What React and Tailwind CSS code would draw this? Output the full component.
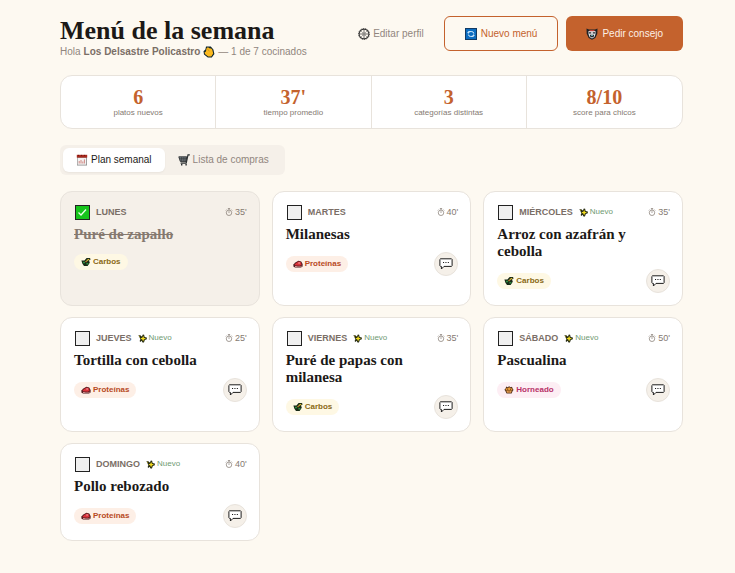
import React, { useState } from 'react';

const GearIcon = () => (
  <svg viewBox="0 0 12 12" className="size-3 shrink-0" fill="none" stroke="#333" aria-hidden="true">
    <circle cx="6" cy="6" r="4.9" strokeWidth="1.1" />
    <circle cx="6" cy="6" r="5.5" strokeWidth="0.8" strokeDasharray="1.2 1.2" />
    <circle cx="6" cy="6" r="1.1" strokeWidth="0.7" />
    <path d="M6 1.4v3.4M6 7.2v3.4M1.4 6h3.4M7.2 6h3.4" strokeWidth="0.7" />
    <path d="M3 3l2 2M7 7l2 2M9 3L7 5M5 7L3 9" strokeWidth="0.4" />
  </svg>
);

const RefreshIcon = () => (
  <svg viewBox="0 0 12 12" className="size-3 shrink-0" aria-hidden="true">
    <rect width="12" height="12" fill="#123a63" />
    <rect x="1" y="1" width="10" height="10" fill="#0b6cc0" />
    <g fill="none" stroke="#d8efff" strokeWidth="1">
      <path d="M3.4 5V3.6h3.4q1.8 0 2 2" />
      <path d="M3.4 6.6q.2 1.8 2 1.8h3V7" />
      <path d="M2.4 4.4l1 1 1-1M7.6 7.6l1-1 1 1" strokeWidth="0.8" />
    </g>
  </svg>
);

const ChefIcon = () => (
  <svg viewBox="0 0 12 12" className="size-3 shrink-0" aria-hidden="true">
    <path d="M0.5 0.5L3 1.5h6l2.5-1-.2 5.3L9.3 10 6 11.8 2.7 10 .7 5.8z" fill="#202124" />
    <path d="M2.5 3h7v3L8.5 9 6 10.5 3.5 9l-1-3z" fill="#dfe3e6" />
    <path d="M3.5 2h5v1.2h-5z" fill="#c33f35" />
    <path d="M3 4.2h2.2v1.2H3zM6.8 4.2H9v1.2H6.8zM4 6.8h4v1.8L6 9.6 4 8.6z" fill="#26282b" />
    <path d="M5 7.3h2v.8H5z" fill="#7ccbd5" />
  </svg>
);

const WaveIcon = () => (
  <svg viewBox="0 0 12 12" className="size-3 shrink-0" aria-hidden="true">
    <path d="M3 .6L7.8.4l2.6 3 1 4.6-2.6 3.4-4 .2L1 8.4.5 5.2 2.4 3.6z" fill="#10262b" />
    <path d="M3.4 2.4l1.4-1.2 2.6 1.6.2-.8 1.6 1.6 1 3.8-2 3-3 .2-3.2-2.6-.4-1.8L3 5.6z" fill="#fbb91f" />
    <path d="M4.4 3.2L6.4 5" stroke="#9c6410" strokeWidth="0.5" />
  </svg>
);

const CalendarIcon = () => (
  <svg viewBox="0 0 12 12" className="size-3 shrink-0" aria-hidden="true">
    <path d="M1 1h10v10.5H1z" fill="#8b8b8b" />
    <path d="M1.6 3.8h8.6v6.9H1.6z" fill="#f3f1f1" />
    <path d="M.8.8h10.4v2.8H.8z" fill="#a8281d" />
    <path d="M2 1.4h1M5 1.4h1M8 1.4h1" stroke="#5a100b" strokeWidth="0.8" />
    <path d="M3.2 9.5V7M5 9.5V6M6.8 9.5V7.5M8.4 9.5V5.4" stroke="#c76f68" strokeWidth="0.8" />
  </svg>
);

const CartIcon = () => (
  <svg viewBox="0 0 12 12" className="size-3 shrink-0" fill="none" stroke="#2b2f31" aria-hidden="true">
    <path d="M.8 2.8h8L8 7.6H2.4z" fill="#89929a" strokeWidth="0.9" />
    <path d="M1.2 4.4h7.2M1.8 6h6.4M3.4 3v4.4M5.2 3v4.4M7 3v4.4" strokeWidth="0.6" />
    <path d="M11.8.8H10L8.2 9.2H2.6" strokeWidth="1.2" />
    <path d="M3 10.8h1.4M7.4 10.8h1.4" strokeWidth="1.5" />
  </svg>
);

const TimerIcon = () => (
  <svg viewBox="0 0 10 10" className="size-2 shrink-0" fill="none" stroke="currentColor" aria-hidden="true">
    <circle cx="5" cy="6" r="3.4" strokeWidth="0.9" />
    <path d="M3.6.7h2.8M5 .8v1.8M5 4v2.2M8 2l1 1M2 2L1 3" strokeWidth="0.9" />
  </svg>
);

const SparkleIcon = () => (
  <svg viewBox="0 0 10 10" className="size-[9px] shrink-0" aria-hidden="true">
    <path d="M.4 1.4h2.4l.6 1.2 1-.2L5.4.6l1.4.2.6 2.4 2.4.8v1.8l-2.2 1-1 2.6H5L4 7.6 2.6 8.8l-.8-1 .8-1.6L1.8 4z" fill="#262b12" />
    <path d="M5.7 2l.8 2.3 2.3.8-2.3.9-.8 2.3-.9-2.3-2.3-.9 2.3-.8z" fill="#f4dd1f" />
    <path d="M1.2 2h1v1h-1z" fill="#b39b1c" />
  </svg>
);

const GrainIcon = () => (
  <svg viewBox="0 0 10 10" className="size-[10px] shrink-0" aria-hidden="true">
    <path d="M.4 3.6h3L5.6 1H9l.6 1.4-1.6 1 .8 2.4L6.6 9H3L1.4 6.8z" fill="#182a16" />
    <path d="M5 3.2L8 1.8l.6.6-2.2 1.6z" fill="#e9c136" />
    <path d="M2 4.8h2v1.4H2zM5.4 6h2v1.4h-2z" fill="#2f8d41" />
    <path d="M4.2 4h2v1.2h-2z" fill="#a9752a" />
  </svg>
);

const MeatIcon = () => (
  <svg viewBox="0 0 10 10" className="size-[10px] shrink-0" aria-hidden="true">
    <path d="M.4 5.6L2.4 3.4l3-1.6 2.8.6 1.4 2.6v2.4L8 8.6H2L.4 7.4z" fill="#4b1518" />
    <path d="M1.4 5.4l2-1.6 2.4-1.2 2 .6.9 2.2L7 6.8 2.6 6.6z" fill="#d8323a" />
    <path d="M1.6 6.8l3 .6h3L9 6.4v.8l-1.4.7H2.4z" fill="#e9a7a4" />
    <path d="M5.4 3.4h1.4v1.2H5.4z" fill="#f7cbc9" />
  </svg>
);

const PieIcon = () => (
  <svg viewBox="0 0 10 10" className="size-[10px] shrink-0" aria-hidden="true">
    <path d="M2.2 1.6l1.4.6 1.6-1 1.4 1 1.4-.4.6 1.8 1 1.4-.8.8L7.6 8.6H2.6L1.2 5.8l-.8-1L1.6 3.6z" fill="#55331d" />
    <path d="M2.2 3.2l1.2.2 1.8-1.2 1.6 1.2 1-.2.6 1.4-.6.8H2.4l-.8-1z" fill="#e99a35" />
    <path d="M2.4 6h5.2L7 7.8H3.2z" fill="#e39a4e" />
    <path d="M3.2 4.2h1v.8h-1zM6 4.2h1v.8H6zM4.6 6.4h1v.8h-1z" fill="#65361c" />
  </svg>
);

const ChatIcon = () => (
  <svg viewBox="0 0 14 12" className="h-3 w-[14px]" aria-hidden="true">
    <path d="M1.5.8h11l.6.6v6.2l-.6.8H5L2.4 11V8.4H1.5l-.6-.8V1.4z" fill="#fff" stroke="#1c1c1c" strokeWidth="1" />
    <path d="M4 4h1.1v1.1H4zM6.4 4h1.1v1.1H6.4zM8.8 4h1.1v1.1H8.8z" fill="#1c1c1c" />
  </svg>
);

const CATEGORIES = {
  Carbos: { icon: GrainIcon, style: 'bg-[#fef8e4] text-[#8a6914]' },
  Proteínas: { icon: MeatIcon, style: 'bg-[#fdefe6] text-[#b84a1e]' },
  Horneado: { icon: PieIcon, style: 'bg-[#fdeef4] text-[#b83268]' },
};

const STATS = [
  { value: '6', label: 'platos nuevos' },
  { value: "37'", label: 'tiempo promedio' },
  { value: '3', label: 'categorías distintas' },
  { value: '8/10', label: 'score para chicos' },
];

const MENU = [
  { day: 'Lunes', dish: 'Puré de zapallo', time: 35, category: 'Carbos', isNew: false },
  { day: 'Martes', dish: 'Milanesas', time: 40, category: 'Proteínas', isNew: false },
  { day: 'Miércoles', dish: 'Arroz con azafrán y cebolla', time: 35, category: 'Carbos', isNew: true },
  { day: 'Jueves', dish: 'Tortilla con cebolla', time: 25, category: 'Proteínas', isNew: true },
  { day: 'Viernes', dish: 'Puré de papas con milanesa', time: 35, category: 'Carbos', isNew: true },
  { day: 'Sábado', dish: 'Pascualina', time: 50, category: 'Horneado', isNew: true },
  { day: 'Domingo', dish: 'Pollo rebozado', time: 40, category: 'Proteínas', isNew: true },
];

const MealCard = ({ meal, done, onToggle }) => {
  const { icon: Icon, style } = CATEGORIES[meal.category];
  return (
    <article className={`rounded-xl border border-[#e8e3dc] p-3 pl-[13px] ${done ? 'bg-[#f5f0e9]' : 'bg-white'}`}>
      <div className="flex h-4 items-center">
        <label className="relative flex items-center gap-[6px] pl-px text-[9px] font-bold uppercase text-[#7a6e66]">
          <input
            type="checkbox"
            checked={done}
            onChange={onToggle}
            className="size-[15px] appearance-none border border-[#222] bg-[#f0f0f0] checked:bg-[#16c41c]"
          />
          {done && (
            <svg viewBox="0 0 15 15" className="pointer-events-none absolute left-px size-[15px]" aria-hidden="true">
              <path d="M3.5 7.5l2.5 2.5 5-5.5" fill="none" stroke="#eaffea" strokeWidth="1.3" />
            </svg>
          )}
          {meal.day}
        </label>
        {meal.isNew && (
          <span className="ml-[6px] flex items-center gap-[2px] text-[8px] text-[#6f9a72]">
            <SparkleIcon />
            Nuevo
          </span>
        )}
        <span className="ml-auto flex items-center gap-[2px] text-[9px] text-[#857a72]">
          <TimerIcon />
          {meal.time}'
        </span>
      </div>
      <h2
        className={`mt-[6px] font-['Liberation_Serif',serif] text-[15px] leading-[17px] font-bold ${
          done ? 'text-[#857970] line-through' : 'text-[#1c1917]'
        }`}
      >
        {meal.dish}
      </h2>
      <div className="mt-[9px] flex min-h-5 items-center justify-between">
        <span className={`flex h-4 items-center gap-[2px] rounded-full px-[7px] text-[8px] font-bold ${style}`}>
          <Icon />
          {meal.category}
        </span>
        {!done && (
          <button
            type="button"
            aria-label={`Comentar ${meal.dish}`}
            className="flex size-6 items-center justify-center rounded-full border border-[#e8e3dc] bg-[#f5f0e9]"
          >
            <ChatIcon />
          </button>
        )}
      </div>
    </article>
  );
};

export default function App() {
  const [tab, setTab] = useState('plan');
  const [cooked, setCooked] = useState({ Lunes: true });
  const count = MENU.filter((meal) => cooked[meal.day]).length;

  const tabStyle = (name) =>
    `flex h-6 items-center gap-[3px] rounded-md px-[13px] ${
      tab === name ? 'bg-white text-[#1c1917] shadow-xs' : 'text-[#91867e]'
    }`;

  return (
    <div className="min-h-screen bg-[#fdf9f1] pt-4 pr-[52px] pb-8 pl-[60px] font-['Liberation_Sans',sans-serif] text-[10px] leading-[14px]">
      <header className="flex items-start justify-between">
        <div>
          <h1 className="font-['Liberation_Serif',serif] text-[26px] leading-[29px] font-bold text-[#1c1917]">
            Menú de la semana
          </h1>
          <p className="flex items-center gap-[3px] text-[#91867e]">
            Hola <strong className="text-[#7a6e66]">Los Delsastre Policastro</strong>
            <WaveIcon /> — {count} de {MENU.length} cocinados
          </p>
        </div>
        <div className="flex gap-2">
          <button type="button" className="flex items-center gap-[3px] px-3 text-[#91867e]">
            <GearIcon />
            Editar perfil
          </button>
          <button
            type="button"
            className="flex h-[35px] items-center gap-1 rounded-md border border-[#c4622d] px-5 text-[#c4622d]"
          >
            <RefreshIcon />
            Nuevo menú
          </button>
          <button type="button" className="flex h-[35px] items-center gap-1 rounded-md bg-[#c4622d] px-5 text-[#fdf0e6]">
            <ChefIcon />
            Pedir consejo
          </button>
        </div>
      </header>

      <dl className="mt-4 grid grid-cols-4 divide-x divide-[#e8e3dc] rounded-xl border border-[#e8e3dc] bg-white">
        {STATS.map((stat) => (
          <div key={stat.label} className="flex flex-col-reverse items-center py-[10px]">
            <dt className="text-[8px] leading-[10px] text-[#857a72]">{stat.label}</dt>
            <dd className="font-['Liberation_Serif',serif] text-[20px] leading-[22px] font-bold text-[#c4622d]">
              {stat.value}
            </dd>
          </div>
        ))}
      </dl>

      <div role="tablist" className="mt-4 flex w-fit rounded-md bg-[#f5f0e9] p-[3px]">
        <button type="button" role="tab" aria-selected={tab === 'plan'} onClick={() => setTab('plan')} className={tabStyle('plan')}>
          <CalendarIcon />
          Plan semanal
        </button>
        <button type="button" role="tab" aria-selected={tab === 'lista'} onClick={() => setTab('lista')} className={tabStyle('lista')}>
          <CartIcon />
          Lista de compras
        </button>
      </div>

      <main className="mt-4 grid grid-cols-3 gap-x-3 gap-y-[11px]">
        {MENU.map((meal) => (
          <MealCard
            key={meal.day}
            meal={meal}
            done={Boolean(cooked[meal.day])}
            onToggle={() => setCooked({ ...cooked, [meal.day]: !cooked[meal.day] })}
          />
        ))}
      </main>
    </div>
  );
}
